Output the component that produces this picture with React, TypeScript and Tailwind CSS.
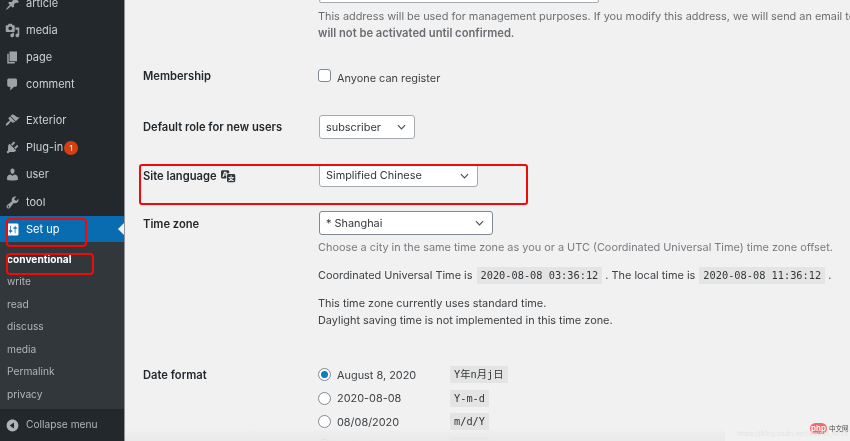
import React from "react";

const P = {
  post: "M10.44 3.02l1.82-1.82 6.36 6.35-1.83 1.82c-1.05-.68-2.48-.57-3.41.36l-.75.75c-.92.93-1.04 2.35-.35 3.41l-1.83 1.82-2.41-2.41-2.8 2.79c-.42.42-3.38 2.71-3.8 2.29s1.86-3.39 2.28-3.81l2.79-2.79L4.1 9.36l1.83-1.82c1.05.69 2.48.57 3.4-.36l.75-.75c.93-.92 1.05-2.35.36-3.41z",
  media: "M13 11V4c0-.55-.45-1-1-1h-1.67L9 1H5L3.67 3H2c-.55 0-1 .45-1 1v7c0 .55.45 1 1 1h10c.55 0 1-.45 1-1zM7 4.5c1.38 0 2.5 1.12 2.5 2.5S8.38 9.5 7 9.5 4.5 8.38 4.5 7 5.62 4.5 7 4.5zM14 6h5v10.5c0 1.38-1.12 2.5-2.5 2.5S14 17.88 14 16.5s1.12-2.5 2.5-2.5c.17 0 .34.02.5.05V9h-3V6zm-4 8.05V13h2v3.5c0 1.38-1.12 2.5-2.5 2.5S7 17.88 7 16.5 8.12 14 9.5 14c.17 0 .34.02.5.05z",
  page: "M6 15V2h10v13H6zm-1 1h8v2H3V5h2v11z",
  comment: "M5 2h9c1.1 0 2 .9 2 2v7c0 1.1-.9 2-2 2h-2l-5 5v-5H5c-1.1 0-2-.9-2-2V4c0-1.1.9-2 2-2z",
  brush: "M14.48 11.06L7.41 3.99l1.5-1.5c.5-.56 2.3-.47 3.51.32 1.21.8 1.43 1.28 2.91 2.1 1.18.64 2.45 1.26 4.45.85zm-.71.71L6.7 4.7 4.93 6.47c-.39.39-.39 1.02 0 1.41l1.06 1.06c.39.39.39 1.03 0 1.42-.6.6-1.43 1.11-2.21 1.69-.35.26-.7.53-1.01.84-1.34 1.34-2.37 3.09-1.72 3.74.65.65 2.4-.38 3.74-1.72.31-.31.58-.66.84-1.01.58-.78 1.09-1.61 1.69-2.21.39-.39 1.03-.39 1.42 0l1.06 1.06c.39.39 1.02.39 1.41 0z",
  plugin: "M13.11 4.36L9.87 7.6 8 5.73l3.24-3.24c.35-.34 1.05-.2 1.56.32.52.51.66 1.21.31 1.55zm-8 1.77l.91-1.12 9.01 9.01-1.19.84c-.71.71-2.63 1.16-3.82 1.16H6.14L4.9 17.26c-.59.59-1.54.59-2.12 0-.59-.58-.59-1.53 0-2.12l1.24-1.24v-3.88c0-1.13.4-3.19 1.09-3.89zm7.26 3.97l3.24-3.24c.34-.35 1.04-.21 1.55.31.52.51.66 1.21.31 1.55l-3.24 3.25z",
  user: "M10 9.25c-2.27 0-2.73-3.44-2.73-3.44C7 4.02 7.82 2 9.97 2c2.16 0 2.98 2.02 2.71 3.81 0 0-.41 3.44-2.68 3.44zm0 2.57L12.72 10c2.39 0 4.52 2.33 4.52 4.53v2.49s-3.65 1.13-7.24 1.13c-3.65 0-7.24-1.13-7.24-1.13v-2.49c0-2.25 1.94-4.48 4.47-4.48z",
  tool: "M16.68 9.77c-1.34 1.34-3.3 1.67-4.95.99l-5.41 6.52c-.99.99-2.59.99-3.58 0s-.99-2.59 0-3.57l6.52-5.42c-.68-1.65-.35-3.61.99-4.95 1.28-1.28 3.12-1.62 4.72-1.06l-2.89 2.89 2.82 2.82 2.86-2.87c.53 1.58.18 3.39-1.08 4.65zM3.81 16.21c.4.39 1.04.39 1.43 0 .4-.4.4-1.04 0-1.43-.39-.4-1.03-.4-1.43 0-.39.39-.39 1.03 0 1.43z",
  settings: "M18 16V4c0-1.1-.9-2-2-2H4c-1.1 0-2 .9-2 2v12c0 1.1.9 2 2 2h12c1.1 0 2-.9 2-2zM8 11h1c.55 0 1 .45 1 1s-.45 1-1 1H8v1.5c0 .28-.22.5-.5.5s-.5-.22-.5-.5V13H6c-.55 0-1-.45-1-1s.45-1 1-1h1V5.5c0-.28.22-.5.5-.5s.5.22.5.5V11zm5-2h-1c-.55 0-1-.45-1-1s.45-1 1-1h1V5.5c0-.28.22-.5.5-.5s.5.22.5.5V7h1c.55 0 1 .45 1 1s-.45 1-1 1h-1v5.5c0 .28-.22.5-.5.5s-.5-.22-.5-.5V9z",
  collapse: "M10 2.16c4.33 0 7.84 3.51 7.84 7.84s-3.51 7.84-7.84 7.84S2.16 14.33 2.16 10 5.71 2.16 10 2.16zm2 11.72V6.12L6.18 9.97z",
  translate: "M11 7H9.49c-.63 0-1.25.3-1.59.7L7 5H4.13l-2.39 7h1.69l.74-2H7v4H2c-1.1 0-2-.9-2-2V5c0-1.1.9-2 2-2h7c1.1 0 2 .9 2 2v2zM6.51 9H4.49l1-2.93zM10 8h7c1.1 0 2 .9 2 2v7c0 1.1-.9 2-2 2h-7c-1.1 0-2-.9-2-2v-7c0-1.1.9-2 2-2zm7.25 5v-1.08h-3.17V9.75h-1.16v2.17H9.75V13h1.28c.11.85.56 1.85 1.28 2.62-.87.36-1.89.62-2.31.62-.01.02.22.97.2 1.46.84 0 2.21-.5 3.28-1.15 1.09.65 2.48 1.15 3.34 1.15-.02-.49.2-1.44.2-1.46-.43 0-1.49-.26-2.38-.63.7-.77 1.14-1.77 1.25-2.61h1.36zm-3.81 1.93c-.5-.46-.85-1.13-1.01-1.93h2.09c-.17.8-.51 1.47-1 1.93l-.04.03s-.03-.02-.04-.03z",
};

function Dash({ d, className }: { d: string; className?: string }) {
  return (
    <svg viewBox="0 0 20 20" className={className} fill="currentColor" aria-hidden="true">
      <path d={d} />
    </svg>
  );
}

function Item({ icon, label, h, badge, active }: { icon: string; label: string; h: string; badge?: string; active?: boolean }) {
  return (
    <div className={`flex items-center pl-[5px] text-[11px] ${h} ${active ? "bg-[#0a6cb0] text-white" : "text-[#cfd1d3]"}`}>
      <Dash d={icon} className={`w-[15px] h-[15px] shrink-0 ${active ? "text-white" : "text-[#9ea3a7]"}`} />
      <span className="ml-[6px]">{label}</span>
      {badge && (
        <span className="ml-[1px] w-[14px] h-[14px] rounded-full bg-[#d54012] text-white text-[8px] flex items-center justify-center">{badge}</span>
      )}
    </div>
  );
}

function Sub({ label, bold }: { label: string; bold?: boolean }) {
  return <div className={`h-[22.5px] flex items-center pl-[7px] text-[10.2px] ${bold ? "font-bold text-white" : "text-[#b0b4b8]"}`}>{label}</div>;
}

function Select({ label, w, h, dark }: { label: string; w: string; h: string; dark?: boolean }) {
  return (
    <div className={`${w} ${h} flex items-center justify-between pl-[6px] pr-[8px] bg-white rounded-[3px] border ${dark ? "border-[#7e8993]" : "border-[#a5abb0]"} text-[#32373c]`}>
      <span>{label}</span>
      <svg viewBox="0 0 10 6" className="w-[9px] h-[6px]" fill="none" stroke="#4a5157" strokeWidth="1.3"><path d="M1 1l4 4 4-4" /></svg>
    </div>
  );
}

function Code({ children }: { children: React.ReactNode }) {
  return <span className="inline-block h-[17px] leading-[17px] px-[4px] bg-[#e4e4e4] text-[#33373a] text-[10.3px] font-['DejaVu_Sans_Mono','Noto_Sans_CJK_SC',monospace]">{children}</span>;
}

function Radio({ on, label, code, h }: { on?: boolean; label: string; code: string; h: string }) {
  return (
    <div className={`flex items-center ${h}`}>
      <span className="w-[13px] h-[13px] rounded-full bg-white border border-[#7e8993] flex items-center justify-center shrink-0">
        {on && <span className="w-[7px] h-[7px] rounded-full bg-[#0a7cc0]" />}
      </span>
      <span className="w-[113px] ml-[6px] text-[#3d4246]">{label}</span>
      <Code>{code}</Code>
    </div>
  );
}

export default function App() {
  return (
    <div className="relative w-[850px] h-[441px] overflow-hidden flex bg-[#f1f1f1] text-[10.9px] font-['Inter','Liberation_Sans',sans-serif] blur-[0.3px]">
      <aside className="w-[125px] shrink-0 h-full flex flex-col bg-[#23282d] border-r border-[#8f9296]">
        <div className="-mt-[10px]">
          <Item icon={P.post} label="article" h="h-[27px]" />
          <Item icon={P.media} label="media" h="h-[27px]" />
          <Item icon={P.page} label="page" h="h-[27px]" />
          <Item icon={P.comment} label="comment" h="h-[27px]" />
        </div>
        <div className="mt-[9px]">
          <Item icon={P.brush} label="Exterior" h="h-[27px]" />
          <Item icon={P.plugin} label="Plug-in" h="h-[27px]" badge="1" />
          <Item icon={P.user} label="user" h="h-[27px]" />
          <Item icon={P.tool} label="tool" h="h-[28px]" />
        </div>
        <div className="relative">
          <Item icon={P.settings} label="Set up" h="h-[26px]" active />
          <span className="absolute right-0 top-[7px] border-y-[6px] border-y-transparent border-r-[6px] border-r-[#f1f1f1]" />
        </div>
        <div className="bg-[#32373c] pt-[6px] h-[167px]">
          <Sub label="conventional" bold />
          <Sub label="write" />
          <Sub label="read" />
          <Sub label="discuss" />
          <Sub label="media" />
          <Sub label="Permalink" />
          <Sub label="privacy" />
        </div>
        <div className="flex-1 flex items-center pl-[5px] text-[10.2px] text-[#b0b4b8]">
          <Dash d={P.collapse} className="w-[15px] h-[15px] text-[#b0b4b8]" />
          <span className="ml-[6px]">Collapse menu</span>
        </div>
      </aside>

      <main className="flex-1 min-w-0 pl-[18px] text-[#3d4246]">
        <div className="h-[4px] ml-[176px] w-[280px] -mt-[1px] bg-white border border-[#a5abb0] rounded-[3px]" />
        <div className="ml-[175px] mt-[5px] whitespace-nowrap text-[#6a6e72] leading-[17px]">
          <div>This address will be used for management purposes. If you modify this address, we will send an email to this address</div>
          <div className="font-semibold text-[11.2px]">will not be activated until confirmed.</div>
        </div>

        <div className="flex mt-[26px] h-[30px]">
          <div className="w-[175px] font-semibold text-[11.2px] text-[#23282d]">Membership</div>
          <div className="flex items-start">
            <span className="w-[13px] h-[13px] rounded-[3px] bg-white border border-[#7e8993] mt-[1px]" />
            <span className="ml-[6px] mt-[2px]">Anyone can register</span>
          </div>
        </div>

        <div className="flex items-center mt-[17px] h-[24px]">
          <div className="w-[176px] pt-[1px] font-semibold text-[11.2px] text-[#23282d]">Default role for new users</div>
          <Select label="subscriber" w="w-[96px]" h="h-[24px]" />
        </div>

        <div className="flex items-center mt-[25px] h-[23px]">
          <div className="w-[176px] pt-[1px] flex items-center font-semibold text-[11.2px] text-[#23282d]">
            Site language
            <Dash d={P.translate} className="ml-[4px] w-[15px] h-[15px] text-[#32373c]" />
          </div>
          <Select label="Simplified Chinese" w="w-[159px]" h="h-[23px]" />
        </div>

        <div className="flex mt-[24px]">
          <div className="w-[176px] pt-[5px] font-semibold text-[11.2px] text-[#23282d]">Time zone</div>
          <div className="flex-1 min-w-0 whitespace-nowrap">
            <Select label="* Shanghai" w="w-[174px]" h="h-[24px]" dark />
            <div className="mt-[4px] h-[17px] leading-[17px] text-[#777b7f] -ml-[1px]">Choose a city in the same time zone as you or a UTC (Coordinated Universal Time) time zone offset.</div>
            <div className="mt-[11px] h-[17px] leading-[17px] -ml-[1px]">
              Coordinated Universal Time is <span className="ml-[1px]"><Code>2020-08-08 03:36:12</Code></span> . The local time is <span className="ml-[1px]"><Code>2020-08-08 11:36:12</Code></span> .
            </div>
            <div className="mt-[11px] leading-[17px] -ml-[1px]">
              <div>This time zone currently uses standard time.</div>
              <div>Daylight saving time is not implemented in this time zone.</div>
            </div>
          </div>
        </div>

        <div className="flex mt-[34px]">
          <div className="w-[175px] pt-[4px] font-semibold text-[11.2px] text-[#23282d]">Date format</div>
          <div>
            <Radio on label="August 8, 2020" code="Y年n月j日" h="h-[23.5px]" />
            <Radio label="2020-08-08" code="Y-m-d" h="h-[23.5px]" />
            <Radio label="08/08/2020" code="m/d/Y" h="h-[23.5px]" />
            <Radio label="08/08/2020" code="d/m/Y" h="h-[23.5px]" />
          </div>
        </div>
      </main>

      <div className="absolute left-[139px] top-[164px] w-[389px] h-[41px] rounded-[3px] border-2 border-[#f00a0a]" />
      <div className="absolute left-[6px] top-[218px] w-[81px] h-[29px] rounded-[4px] border-2 border-[#f00a0a]" />
      <div className="absolute left-[6px] top-[253px] w-[88px] h-[22px] rounded-[4px] border-2 border-[#f00a0a]" />

      <div className="absolute inset-x-[125px] bottom-0 h-[14px] bg-gradient-to-b from-transparent to-[#e9e9e9]" />
      <div className="absolute left-[810px] top-[423px] w-[17px] h-[11px] rounded-full bg-[#ee6a6f] text-white text-[8px] leading-[11px] text-center font-semibold">php</div>
      <div className="absolute left-[829px] top-[423px] text-[6.5px] leading-[11px] text-[#444] font-['Noto_Sans_CJK_SC',sans-serif]">中文网</div>
      <div className="absolute left-[737px] top-[429px] text-[7px] leading-[10px] text-[#e2e2e2] whitespace-nowrap">https://blog.csdn.net/weixin_47767165</div>
    </div>
  );
}
